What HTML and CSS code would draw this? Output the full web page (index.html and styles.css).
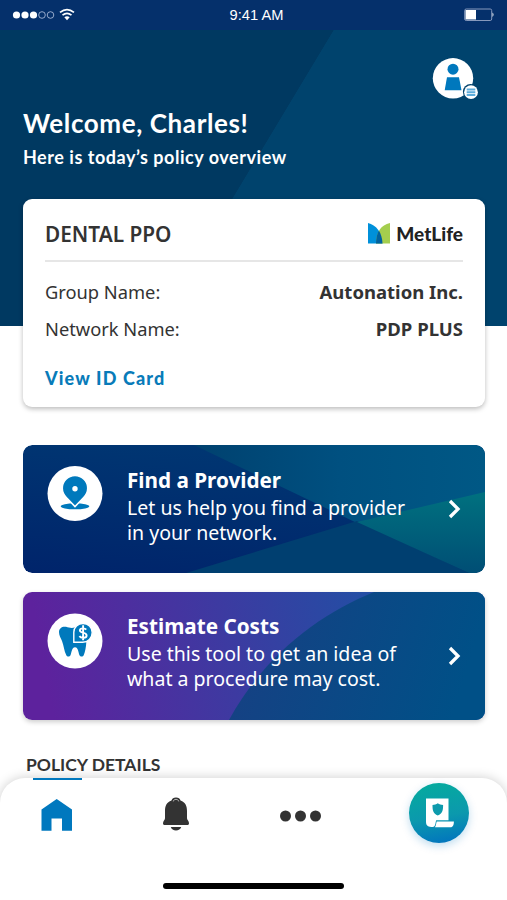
FILE: index.html
```html
<!DOCTYPE html>
<html lang="en">
<head>
<meta charset="utf-8">
<title>Policy overview</title>
<link rel="stylesheet" href="styles.css">
</head>
<body>
<div class="app">
  <header class="hero">
    <div class="status">
      <svg class="signal" width="68" height="16" viewBox="0 0 68 16">
        <g fill="#fff"><circle cx="8.500" cy="8" r="3.600"/><circle cx="17" cy="8" r="3.600"/><circle cx="25.500" cy="8" r="3.600"/></g>
        <g fill="none" stroke="#b9c7e2" stroke-width=".8"><circle cx="34" cy="8" r="3.300"/><circle cx="42.500" cy="8" r="3.300"/></g>
        <g fill="none" stroke="#fff" stroke-width="1.700"><path d="M52 5.300q7-5.400 14 0"/><path d="M54.500 8.200q4.500-3.500 9 0"/></g>
        <path fill="#fff" d="M56.300 10.200q2.700-2 5.400 0L59 13.200z"/>
      </svg>
      <span class="time">9:41 AM</span>
      <svg class="battery" width="31" height="14" viewBox="0 0 31 14">
        <rect x=".7" y="1" width="27" height="11.500" rx="1.500" fill="none" stroke="#8799bd" stroke-width="1"/>
        <rect x="1.500" y="2" width="10.500" height="9.500" fill="#fff"/>
        <path fill="#fff" d="M28.500 4.500q2 2.200 0 4.500z"/>
      </svg>
    </div>
    <svg class="avatar" width="48" height="44" viewBox="0 0 48 44">
      <circle cx="21" cy="21.300" r="20.200" fill="#fff"/>
      <circle cx="21" cy="12.200" r="5.500" fill="#0078bd"/>
      <path fill="#0078bd" d="M15 20.200h12l2.500 13H12.700z"/>
      <circle cx="38.600" cy="34.800" r="7.700" fill="#00426c"/>
      <circle cx="39" cy="35.200" r="6.900" fill="#fff"/>
      <path stroke="#5cacdb" stroke-width="2" d="M34.700 32.500h8.600M34.700 35.200h8.600M34.700 37.900h8.600"/>
    </svg>
    <h1 class="welcome">Welcome, Charles!</h1>
    <p class="intro">Here is today’s policy overview</p>
  </header>

  <main class="content">
    <section class="policy">
      <div class="policy-head">
        <h2 class="plan">DENTAL PPO</h2>
        <div class="brand">
          <svg width="22" height="21" viewBox="0 0 22 21">
            <path fill="#0090da" d="M0 0C8 2 14 9 14.500 20.500H0z"/>
            <path fill="#a4ce4e" d="M22 0v20.500H8C8 9 13 2 22 0z"/>
            <path fill="#0061a0" d="M10.900 7.500C13 11 14.300 15.500 14.500 20.500H8c0-5.400 1-9.600 2.900-13z"/>
          </svg>
          <span class="brand-name">MetLife</span>
        </div>
      </div>
      <div class="row"><span class="label">Group Name:</span><span class="value">Autonation Inc.</span></div>
      <div class="row"><span class="label">Network Name:</span><span class="value">PDP PLUS</span></div>
      <a class="id-link">View ID Card</a>
    </section>

    <section class="action provider">
      <svg class="backdrop" viewBox="0 0 462 128" preserveAspectRatio="none">
        <defs>
          <linearGradient id="navy" x1="0" y1="1" x2=".35" y2="0"><stop offset="0" stop-color="#00246b"/><stop offset="1" stop-color="#003672"/></linearGradient>
          <linearGradient id="ocean" x1="0" y1="0" x2="1" y2="0"><stop offset="0" stop-color="#00416f"/><stop offset=".5" stop-color="#005080"/><stop offset="1" stop-color="#005885"/></linearGradient>
          <linearGradient id="teal" x1="0" y1="0" x2="0" y2="1"><stop offset="0" stop-color="#00717f"/><stop offset="1" stop-color="#004e75"/></linearGradient>
        </defs>
        <path fill="url(#navy)" d="M0 0h462v128H0z"/>
        <path fill="url(#ocean)" d="M171 0h291v48L334 78z"/>
        <path fill="#003f70" d="M163 128L334 76l112 52z"/>
        <path fill="url(#teal)" d="M334 77l128-30v81h-16z"/>
      </svg>
      <svg class="badge" width="56" height="56" viewBox="0 0 56 56">
        <circle cx="28" cy="27.500" r="27.500" fill="#fff"/>
        <ellipse cx="28" cy="40.300" rx="14.300" ry="3" fill="#0079bc"/>
        <path fill="#0079bc" stroke="#fff" stroke-width="1.500" d="M28 9.500A12.700 12.700 0 0 0 15.300 22.200c0 3.600 1.500 6.600 4 9.200L28 40.600l8.700-9.200c2.500-2.600 4-5.600 4-9.200A12.700 12.700 0 0 0 28 9.500z"/>
        <circle cx="28" cy="22.700" r="2.700" fill="#fff"/>
      </svg>
      <div class="copy">
        <h3>Find a Provider</h3>
        <p>Let us help you find a provider<br>in your network.</p>
      </div>
      <svg class="chevron" width="14" height="20" viewBox="0 0 14 20"><path d="M2 2l8 8-8 8" fill="none" stroke="#fff" stroke-width="3.300"/></svg>
    </section>

    <section class="action costs">
      <svg class="backdrop" viewBox="0 0 462 128" preserveAspectRatio="none">
        <defs>
          <linearGradient id="violet" gradientUnits="userSpaceOnUse" x1="20" y1="70" x2="340" y2="10"><stop offset="0" stop-color="#5d229d"/><stop offset="1" stop-color="#244da4"/></linearGradient>
          <linearGradient id="blue" x1="0" y1="0" x2="1" y2=".15"><stop offset="0" stop-color="#183f83"/><stop offset="1" stop-color="#005087"/></linearGradient>
        </defs>
        <path fill="url(#violet)" d="M0 0h462v128H0z"/>
        <path fill="url(#blue)" d="M351 0C297 22 242 62 206 128h256V0z"/>
      </svg>
      <svg class="badge" width="56" height="56" viewBox="0 0 56 56">
        <circle cx="28" cy="28" r="27.500" fill="#fff"/>
        <path fill="#0079bc" d="M12 19c0-4 3.500-6 7-5.200 3 .7 5 1.700 9 .7v14.800h11.300c-.2 4.500-1.200 9.500-2.600 13-.7 1.700-3.500 1.600-4.200 0-1.300-3.500-1.300-7.800-4.500-8-3.200.2-3.200 4.500-4.500 8-.7 1.600-3.500 1.700-4.200 0C17 37.500 16.800 32.500 15 28c-1.200-3-3-5.500-3-9z"/>
        <path fill="#0079bc" stroke="#fff" stroke-width="1.400" d="M26.800 29.300V19.200c0-5.200 4.200-8.700 9.200-8.700 5.200 0 9.200 3.900 9.200 9.100 0 5.500-4.200 9.700-9.600 9.700z"/>
        <path fill="none" stroke="#fff" stroke-width="1.900" d="M39.200 16.600c-1-1.500-6.200-2.100-6.300.8 0 2.900 6.700 1.700 6.700 5 0 3.200-5.800 2.700-7.200.7M36.100 12.300v15"/>
      </svg>
      <div class="copy">
        <h3>Estimate Costs</h3>
        <p>Use this tool to get an idea of<br>what a procedure may cost.</p>
      </div>
      <svg class="chevron" width="14" height="20" viewBox="0 0 14 20"><path d="M2 2l8 8-8 8" fill="none" stroke="#fff" stroke-width="3.300"/></svg>
    </section>

    <h2 class="details">POLICY DETAILS</h2>
  </main>

  <nav class="tabs">
    <div class="tab active">
      <svg width="32" height="34" viewBox="0 0 32 34"><path fill="#0078be" d="M.5 11.500L15.700 1 31 11.500v21.300H21V20.500H10.500v12.300H.5z"/></svg>
    </div>
    <div class="tab">
      <svg width="28" height="35" viewBox="0 0 28 35">
        <path fill="#333" d="M9.500 3.500C10 1.500 11.500.5 14 .5s4 1 4.500 3C23.500 5.200 25 9 25 14v7.200c0 1.500 2 3 2 5 0 1-.6 1.800-1.600 1.800H2.600C1.600 28 1 27.200 1 26.200c0-2 2-3.500 2-5V14C3 9 4.500 5.200 9.500 3.500z"/>
        <path fill="none" stroke="#bbb" stroke-width="1" d="M11.300 4.400c.3-2.700 5.100-2.700 5.400 0"/>
        <path fill="#333" d="M8.800 30h10.400c-1 4.500-9.400 4.500-10.400 0z"/>
      </svg>
    </div>
    <div class="tab more">
      <svg width="42" height="12" viewBox="0 0 42 12" fill="#333"><circle cx="5.500" cy="6" r="5.500"/><circle cx="20.500" cy="6" r="5.500"/><circle cx="35.500" cy="6" r="5.500"/></svg>
    </div>
    <div class="tab policy-tab">
      <svg width="60" height="60" viewBox="0 0 60 60">
        <path fill="#fff" d="M17 15.500h22.500v21.800H27.200c-.9 2.300-.6 6.800-3.400 6.800-4.300 0-6.800-1.100-6.800-5z"/>
        <path fill="#fff" d="M27.700 38.500h17.200c0 3-.8 5.800-3.500 5.800H25.800c1.400-1.500 1.200-3.900 1.900-5.800z"/>
        <path fill="#0d9aac" d="M28.800 20.300c1.600 1.300 3.200 1.600 5.300 1.700 0 5.500-.6 8.500-5.300 10.500-4.700-2-5.300-5-5.300-10.500 2.100-.1 3.700-.4 5.300-1.700z"/>
      </svg>
    </div>
    <div class="home-bar"></div>
  </nav>
</div>
</body>
</html>
```

FILE: styles.css
```css
* { box-sizing: border-box; }
body { margin: 0; background: #fff; color: #333; font-family: "Noto Sans", sans-serif; }
h1, h2, h3, p { margin: 0; }
svg { display: block; }
.app { height: 900px; display: flex; flex-direction: column; overflow: hidden; }
.hero {
  height: 326px; flex: none; display: flex; flex-direction: column; color: #fff;
  background: linear-gradient(121deg, #003961 0 50%, #00436d 50.1%);
}
.status {
  height: 30px; display: grid; grid-template-columns: 1fr auto 1fr; align-items: center;
  padding: 0 12px 0 8px; background: #05306b;
}
.time { font: 14.700px/20px "Liberation Sans", sans-serif; transform: translateX(5px); }
.battery { justify-self: end; }
.avatar { align-self: flex-end; margin: 27px 27px 0 0; }
.welcome { font: 700 26px/32px Lato, sans-serif; margin: 6px 0 0 23px; letter-spacing: .6px; white-space: nowrap; align-self: flex-start; }
.intro { font: 700 18px/22px Lato, sans-serif; margin: 7px 0 0 23px; letter-spacing: .53px; white-space: nowrap; align-self: flex-start; }
.content { height: 579px; flex: none; margin-top: -127px; padding: 0 22px 0 23px; display: flex; flex-direction: column; }
.policy { height: 208px; flex: none; border-radius: 9px; background: #fff; padding: 0 22px; box-shadow: 0 2px 5px #0004; }
.policy-head { height: 63px; border-bottom: 2px solid #e6e6e6; display: flex; align-items: center; justify-content: space-between; padding-top: 8px; margin-bottom: 12px; }
.plan { font-size: 20.800px; line-height: 26px; font-weight: 650; }
.brand { display: flex; align-items: center; gap: 6px; }
.brand-name { font: 900 19px/24px Lato, sans-serif; color: #222; }
.row { height: 36.5px; display: flex; align-items: center; justify-content: space-between; font-size: 18.300px; line-height: 24px; white-space: nowrap; }
.value { font-size: 18.500px; font-weight: 700; }
.id-link { display: inline-block; font: 900 18px/24px Lato, sans-serif; color: #087bb9; letter-spacing: 1.150px; margin-top: 19px; }
.action {
  height: 128px; flex: none; border-radius: 9px; margin-top: 38px; position: relative; overflow: hidden;
  display: grid; grid-template-columns: 80px 1fr 14px; padding: 0 23px 0 24px; color: #fff;
}
.costs { margin-top: 19px; overflow: visible; box-shadow: 0 2px 5px #0003; }
.backdrop { position: absolute; inset: 0; width: 100%; height: 100%; border-radius: 9px; }
.badge, .copy, .chevron { position: relative; }
.badge { margin-top: 21px; }
.copy { padding-top: 21px; font-size: 19.550px; line-height: 24.5px; white-space: nowrap; }
.copy h3 { font-size: 20.700px; line-height: 28px; padding-bottom: 2px; font-weight: 700; }
.costs .copy { padding-top: 20px; }
.chevron { align-self: center; }
.details { font: 700 17.500px/22px Lato, sans-serif; margin: 34px 0 0 3px; }
.tabs {
  height: 122px; flex: none; background: #fff; border-radius: 25px 25px 0 0; box-shadow: 0 0 12px #0003;
  position: relative; display: grid; grid-template-columns: 113px 125px 125px 1fr; align-items: start;
}
.tab { height: 73px; display: flex; align-items: center; justify-content: center; }
.active::before { content: ""; position: absolute; top: 0; left: 33px; width: 49px; height: 2px; background: #0078be; }
.more { padding-top: 3px; }
.policy-tab { width: 60px; height: 60px; margin: 5px 0 0 46px; border-radius: 50%; background: linear-gradient(170deg, #05ac9d, #0b99ad 55%, #0070c0); box-shadow: 0 3px 8px #0078be40; }
.home-bar { position: absolute; left: 163px; top: 105px; width: 181px; height: 6px; border-radius: 3px; background: #000; }
```
